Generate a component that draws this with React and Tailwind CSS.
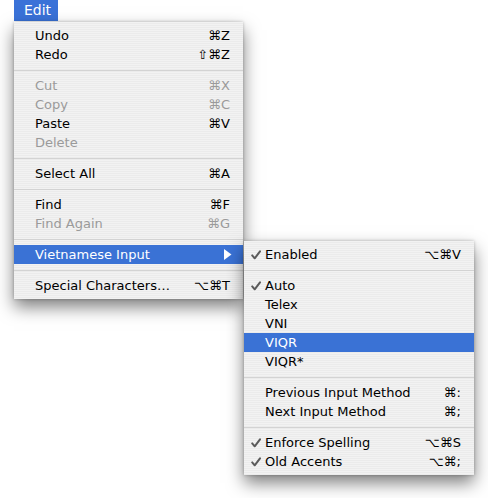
import React from "react";

const font = { fontFamily: '"DejaVu Sans", Verdana, sans-serif' };

function Check({ white }) {
  return (
    <svg width="10" height="10" viewBox="0 0 10 10" className="shrink-0">
      <path d="M1.2 5.4 L3.7 8.3 L9 1.3" fill="none" stroke={white ? "#fff" : "#5a5a5a"} strokeWidth="2" strokeLinecap="round" strokeLinejoin="round" />
    </svg>
  );
}

function Item({ label, shortcut, disabled, selected, check, arrow, sub }) {
  const color = selected ? "text-white" : disabled ? "text-[#9a9a9a]" : "text-black";
  return (
    <div className={`flex h-[19px] items-center ${selected ? "bg-[#3a72d5]" : ""} ${color}`}>
      <div className={`${sub ? "w-[21px] pl-[7px]" : "w-[21px]"} flex items-center shrink-0`}>
        {check ? <Check white={selected} /> : null}
      </div>
      <div className="flex-1 whitespace-nowrap">{label}</div>
      {shortcut ? <div className="whitespace-nowrap pr-[13px]">{shortcut}</div> : null}
      {arrow ? (
        <div className="pr-[11px]">
          <svg width="8" height="11" viewBox="0 0 8 11">
            <path d="M0 0 L7.5 5.5 L0 11 Z" fill="#fff" />
          </svg>
        </div>
      ) : null}
    </div>
  );
}

function Sep() {
  return (
    <div className="h-[12px] flex items-center">
      <div className="h-px w-full bg-[#d3d3d3]" />
    </div>
  );
}

const stripes =
  "bg-[repeating-linear-gradient(to_bottom,#f2f2f2_0px,#f2f2f2_1px,#ebebeb_1px,#ebebeb_2px)]";

export default function App() {
  return (
    <div className="relative w-[488px] h-[498px] bg-white text-[13px] leading-[19px]" style={font}>
      <div className="flex h-[22px]">
        <div className="ml-[14px] h-[21px] w-[44px] bg-[#3a72d8] text-white pl-[10px] flex items-center text-[14px]">
          Edit
        </div>
      </div>

      <div
        className={`absolute left-[14px] top-[22px] w-[229px] py-[4px] ${stripes} shadow-[0_8px_16px_rgba(0,0,0,0.5),0_0_3px_rgba(0,0,0,0.25)]`}
      >
        <Item label="Undo" shortcut="⌘Z" />
        <Item label="Redo" shortcut="⇧⌘Z" />
        <Sep />
        <Item label="Cut" shortcut="⌘X" disabled />
        <Item label="Copy" shortcut="⌘C" disabled />
        <Item label="Paste" shortcut="⌘V" />
        <Item label="Delete" disabled />
        <Sep />
        <Item label="Select All" shortcut="⌘A" />
        <Sep />
        <Item label="Find" shortcut="⌘F" />
        <Item label="Find Again" shortcut="⌘G" disabled />
        <Sep />
        <Item label="Vietnamese Input" selected arrow />
        <Sep />
        <Item label="Special Characters…" shortcut="⌥⌘T" />
      </div>

      <div
        className={`absolute left-[244px] top-[241px] w-[230px] py-[4px] ${stripes} shadow-[0_8px_16px_rgba(0,0,0,0.5),0_0_3px_rgba(0,0,0,0.25)]`}
      >
        <Item label="Enabled" shortcut="⌥⌘V" check sub />
        <Sep />
        <Item label="Auto" check sub />
        <Item label="Telex" sub />
        <Item label="VNI" sub />
        <Item label="VIQR" selected sub />
        <Item label="VIQR*" sub />
        <Sep />
        <Item label="Previous Input Method" shortcut="⌘:" sub />
        <Item label="Next Input Method" shortcut="⌘;" sub />
        <Sep />
        <Item label="Enforce Spelling" shortcut="⌥⌘S" check sub />
        <Item label="Old Accents" shortcut="⌥⌘;" check sub />
      </div>
    </div>
  );
}
